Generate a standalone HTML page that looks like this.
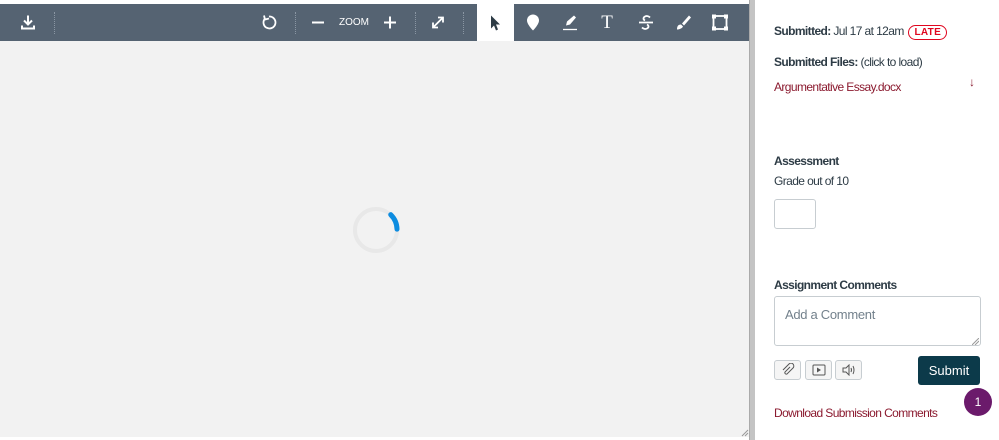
<!DOCTYPE html>
<html><head><meta charset="utf-8"><style>
*{box-sizing:border-box;margin:0;padding:0}
body{width:999px;height:440px;overflow:hidden;background:#fff;font-family:"Liberation Sans",sans-serif;position:relative}
.tb{position:absolute;left:0;top:4px;width:749px;height:37px;background:#556372}
.viewer{position:absolute;left:0;top:41px;width:749px;height:396px;background:#f2f2f2}
.divd{position:absolute;left:749px;top:0;width:6px;height:440px;background:#c4c4c4;border-left:1px solid #aaa}
.ic{position:absolute;top:4px;height:37px;display:flex;align-items:center;justify-content:center}
.sep{position:absolute;top:12px;height:22px;border-left:1px dotted #8a96a3}
.sel{position:absolute;left:477px;top:4px;width:37px;height:37px;background:#fff}
.r{position:absolute;left:774px;font-size:12px;color:#2d3b45;letter-spacing:-0.6px}
b{font-weight:bold}
.late{display:inline-block;border:1px solid #e0061f;color:#e0061f;border-radius:9px;font-size:10px;font-weight:bold;padding:1px 5px;letter-spacing:.3px;margin-left:2px}
a{color:#8b1a2f;text-decoration:none}
.btn{position:absolute;top:360px;width:27px;height:20px;border:1px solid #c7cdd1;border-radius:3px;background:#f5f5f5;display:flex;align-items:center;justify-content:center}
</style></head><body>
<div class="tb"></div>
<div class="sel"></div>
<div class="viewer"></div>
<div class="divd"></div>
<svg style="position:absolute;left:741px;top:429px" width="8" height="8"><path d="M1 7L7 1M4 7L7 4" stroke="#999"/></svg>

<svg class="ic" style="left:18px;width:20px" viewBox="0 0 20 20"><path d="M10 3v9M6 8l4 4 4-4M4 13v3h12v-3" stroke="#fff" stroke-width="2" fill="none"/></svg>
<div class="sep" style="left:54px"></div>
<svg class="ic" style="left:259px;width:20px" viewBox="0 0 20 20"><path d="M6 6A6 6 0 1 0 10 4" stroke="#fff" stroke-width="1.8" fill="none"/><path d="M5 3l1 4 4-1" stroke="#fff" stroke-width="1.8" fill="none"/></svg>
<div class="sep" style="left:295px"></div>
<svg class="ic" style="left:308px;width:20px" viewBox="0 0 20 20"><path d="M4 10h12" stroke="#fff" stroke-width="2"/></svg>
<div class="ic" style="left:336px;width:36px;color:#fff;font-size:10px">ZOOM</div>
<svg class="ic" style="left:380px;width:20px" viewBox="0 0 20 20"><path d="M4 10h12M10 4v12" stroke="#fff" stroke-width="2"/></svg>
<div class="sep" style="left:415px"></div>
<svg class="ic" style="left:428px;width:20px" viewBox="0 0 20 20"><path d="M5 15L15 5M10 5h5v5M5 10v5h5" stroke="#fff" stroke-width="1.8" fill="none"/></svg>
<div class="sep" style="left:463px"></div>
<svg class="ic" style="left:485px;width:20px" viewBox="0 0 20 20"><path d="M6 3v13l3-3 2 5 2-1-2-5h4z" fill="#2d3b45"/></svg>
<svg class="ic" style="left:523px;width:20px" viewBox="0 0 20 20"><path d="M10 2a6 6 0 0 0-6 6c0 4 6 10 6 10s6-6 6-10a6 6 0 0 0-6-6z" fill="#fff"/></svg>
<svg class="ic" style="left:560px;width:20px" viewBox="0 0 20 20"><path d="M6 13l1-4 7-6 2 2-6 7z" fill="#fff"/><path d="M3 17h14" stroke="#fff" stroke-width="1.3"/></svg>
<div class="ic" style="left:597px;width:20px;color:#fff;font-size:19px;font-family:'Liberation Serif',serif">T</div>
<svg class="ic" style="left:636px;width:20px" viewBox="0 0 20 20"><path d="M14 5c-1-1-3-2-5-1s-2 3 0 4M11 12c2 1 2 3 0 4s-4 0-5-1M3 10h14" stroke="#fff" stroke-width="1.8" fill="none"/></svg>
<svg class="ic" style="left:673px;width:20px" viewBox="0 0 20 20"><path d="M16 3l-7 8 2 2 7-8zM8 12c-3 0-4 2-4 5 2 0 5-1 6-3z" fill="#fff"/></svg>
<svg class="ic" style="left:710px;width:20px" viewBox="0 0 20 20"><rect x="3.5" y="3.5" width="13" height="13" stroke="#fff" stroke-width="1.8" fill="none"/><g fill="#fff"><rect x="2" y="2" width="4" height="4"/><rect x="14" y="2" width="4" height="4"/><rect x="2" y="14" width="4" height="4"/><rect x="14" y="14" width="4" height="4"/></g></svg>

<svg style="position:absolute;left:350px;top:204px" width="52" height="52" viewBox="0 0 52 52"><circle cx="26" cy="26" r="21" stroke="#e8e8e8" stroke-width="4" fill="none"/><path d="M42 12A21 21 0 0 1 47 27" stroke="#0d8ce0" stroke-width="5" stroke-linecap="round" fill="none" transform="rotate(-5 26 26)"/></svg>

<div class="r" style="top:24px"><b>Submitted:</b> Jul 17 at 12am <span class="late">LATE</span></div>
<div class="r" style="top:55px"><b>Submitted Files:</b> (click to load)</div>
<div class="r" style="top:80px"><a>Argumentative Essay.docx</a></div>
<div style="position:absolute;left:969px;top:75px;color:#8b1a2f;font-size:12px">↓</div>
<div class="r" style="top:154px"><b>Assessment</b></div>
<div class="r" style="top:174px">Grade out of 10</div>
<div style="position:absolute;left:774px;top:199px;width:42px;height:30px;border:1px solid #c7cdd1;border-radius:3px"></div>
<div class="r" style="top:278px"><b>Assignment Comments</b></div>
<div style="position:absolute;left:774px;top:296px;width:207px;height:50px;border:1px solid #c7cdd1;border-radius:3px;padding:10px;font-size:13px;color:#73818c;letter-spacing:-0.3px">Add a Comment</div>
<svg style="position:absolute;left:972px;top:338px" width="7" height="7"><path d="M0 7L7 0M3 7L7 3" stroke="#999"/></svg>
<div class="btn" style="left:774px"><svg width="14" height="14" viewBox="0 0 14 14"><path d="M9 4L4 9a1.5 1.5 0 0 0 2 2l6-6a2.5 2.5 0 0 0-4-4L2 7" stroke="#555" fill="none"/></svg></div>
<div class="btn" style="left:805px"><svg width="14" height="12" viewBox="0 0 14 12"><rect x="1" y="1" width="12" height="10" rx="1" stroke="#555" fill="none"/><path d="M5 3.5v5l4-2.5z" fill="#555"/></svg></div>
<div class="btn" style="left:835px"><svg width="14" height="12" viewBox="0 0 14 12"><path d="M1 4h3l3-3v10L4 8H1z" stroke="#555" fill="none"/><path d="M9 4q1 2 0 4M11 2q2 4 0 8" stroke="#555" fill="none"/></svg></div>
<div style="position:absolute;left:918px;top:356px;width:62px;height:29px;background:#0c3a4a;color:#fff;border-radius:3px;font-size:13px;display:flex;align-items:center;justify-content:center">Submit</div>
<div style="position:absolute;left:964px;top:388px;width:28px;height:28px;border-radius:50%;background:#6b1a6b;color:#fff;font-size:12px;display:flex;align-items:center;justify-content:center">1</div>
<div class="r" style="top:406px"><a>Download Submission Comments</a></div>
</body></html>
